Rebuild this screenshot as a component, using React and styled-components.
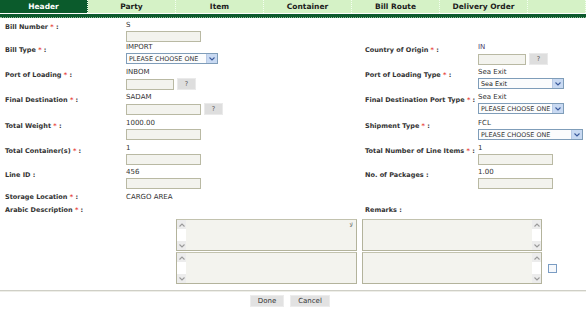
import React from 'react';
import styled, { createGlobalStyle } from 'styled-components';

const Global = createGlobalStyle`
  html, body { margin: 0; padding: 0; background: #fff; }
  body { font-family: "DejaVu Sans", Verdana, sans-serif; font-size: 7px; color: #333; }
`;

const Page = styled.div`
  width: 586px;
  height: 310px;
  overflow: hidden;
  display: flex;
  flex-direction: column;
`;

const TabBar = styled.div`
  display: grid;
  grid-template-columns: repeat(6, 88px) 1fr;
  height: 13px;
  background: #d5f2c6;
`;

const Tab = styled.div`
  display: flex;
  align-items: center;
  justify-content: center;
  font-weight: bold;
  font-size: 7.5px;
  color: ${p => (p.$active ? '#ffffff' : '#1c1c1c')};
  background: ${p => (p.$active ? '#0b5b2c' : '#d5f2c6')};
  border-right: 1px dotted #f4fff0;
`;

const Rule = styled.div`
  margin-top: 1px;
  height: 3px;
  background: #0d5a2d;
  border-bottom: 1px dotted #8fb89a;
`;

const Form = styled.div`
  margin-top: 3px;
  padding-left: 5px;
  display: flex;
  flex-direction: column;
`;

const Row = styled.div`
  display: grid;
  grid-template-columns: 121px 239px 113px 1fr;
  height: ${p => p.$h}px;
`;

const Label = styled.div`
  font-weight: bold;
  font-size: 6.5px;
  color: #333;
  line-height: 8px;
  padding-top: ${p => (p.$pt ?? 3)}px;
  white-space: nowrap;
`;

const Star = styled.span`
  color: #e8473c;
`;

const ValueCell = styled.div`
  display: flex;
  flex-direction: column;
`;

const ValueText = styled.div`
  height: ${p => (p.$h ?? 10)}px;
  line-height: 9px;
  color: ${p => p.$c || '#333'};
  white-space: nowrap;
`;

const FieldLine = styled.div`
  display: flex;
  align-items: center;
  gap: ${p => p.$gap ?? 3}px;
`;

const Input = styled.div`
  box-sizing: border-box;
  width: ${p => p.$w}px;
  height: 11px;
  border: 1px solid #b9b9a3;
  background: #f3f3ee;
`;

const Select = styled.div`
  box-sizing: border-box;
  width: ${p => p.$w}px;
  height: 11px;
  border: 1px solid #7f9db9;
  background: #fbfcfd;
  display: flex;
  align-items: center;
  justify-content: space-between;
  padding-left: 2px;
  font-size: 6.4px;
  color: ${p => (p.$strong ? '#222' : '#333')};
  white-space: nowrap;
  overflow: hidden;
`;

const SelectArrow = styled.span`
  flex: none;
  width: 10px;
  height: 9px;
  background: #c8d9f2;
  border-left: 1px solid #b8c9e4;
  display: flex;
  align-items: center;
  justify-content: center;
`;

const HelpBtn = styled.div`
  box-sizing: border-box;
  width: 19px;
  height: 12px;
  background: #dedede;
  border: 1px solid #eaeaea;
  display: flex;
  align-items: center;
  justify-content: center;
  font-size: 6.5px;
  color: #555;
`;

const AreaGrid = styled.div`
  margin-top: 1px;
  padding-left: 176px;
  display: grid;
  grid-template-columns: 181px 180px 1fr;
  grid-template-rows: 32px 32px;
  column-gap: 5px;
  row-gap: 1px;
`;

const TextBox = styled.div`
  box-sizing: border-box;
  border: 1px solid #b3b39c;
  border-top-color: #c2c2ae;
  background: #f3f3ee;
  display: flex;
  flex-direction: ${p => (p.$rtl ? 'row' : 'row-reverse')};
  position: relative;
`;

const ScrollBar = styled.div`
  width: 9px;
  display: flex;
  flex-direction: column;
  justify-content: space-between;
  background: #ffffff;
`;

const ScrollBtn = styled.div`
  width: 9px;
  height: 9px;
  background: #ececec;
  display: flex;
  align-items: center;
  justify-content: center;
`;

const RtlMark = styled.span`
  position: absolute;
  top: 1px;
  right: 3px;
  font-size: 6px;
  color: #666;
`;

const CheckCell = styled.div`
  padding-left: 1px;
  display: flex;
  align-items: center;
`;

const Check = styled.div`
  box-sizing: border-box;
  width: 9px;
  height: 9px;
  border: 1px solid #7a9cc3;
  background: #f6f8fb;
`;

const Divider = styled.div`
  margin-top: 6px;
  height: 1px;
  background: #cfcfc6;
  border-bottom: 1px solid #eeeee8;
`;

const Actions = styled.div`
  margin-top: 3px;
  display: flex;
  justify-content: center;
  gap: 6px;
  padding-right: 6px;
`;

const Button = styled.div`
  box-sizing: border-box;
  width: ${p => p.$w}px;
  height: 12px;
  background: #e2e2e2;
  border: 1px solid #ececec;
  display: flex;
  align-items: center;
  justify-content: center;
  font-size: 7px;
  color: #333;
`;

const Chevron = ({ up, color = '#3a5a9c' }) => (
  <svg width="6" height="4" viewBox="0 0 6 4">
    <path d={up ? 'M0.5 3.5 L3 1 L5.5 3.5' : 'M0.5 0.5 L3 3 L5.5 0.5'} fill="none" stroke={color} strokeWidth="1.1" />
  </svg>
);

const SelectBox = ({ w, text, strong }) => (
  <Select $w={w} $strong={strong}>
    <span>{text}</span>
    <SelectArrow><Chevron /></SelectArrow>
  </Select>
);

const Req = ({ children }) => (
  <>
    {children} <Star>*</Star> :
  </>
);

const Area = ({ rtl, mark }) => (
  <TextBox $rtl={rtl}>
    <ScrollBar>
      <ScrollBtn><Chevron up color="#9a9a9a" /></ScrollBtn>
      <ScrollBtn><Chevron color="#9a9a9a" /></ScrollBtn>
    </ScrollBar>
    {mark && <RtlMark>ﻻ</RtlMark>}
  </TextBox>
);

const tabs = ['Header', 'Party', 'Item', 'Container', 'Bill Route', 'Delivery Order'];

export default function App() {
  return (
    <Page>
      <Global />
      <TabBar>
        {tabs.map((t, i) => (
          <Tab key={t} $active={i === 0}>{t}</Tab>
        ))}
        <Tab />
      </TabBar>
      <Rule />
      <Form>
        <Row $h={22}>
          <Label $pt={2}><Req>Bill Number</Req></Label>
          <ValueCell>
            <ValueText>S</ValueText>
            <Input $w={75} />
          </ValueCell>
        </Row>
        <Row $h={25}>
          <Label><Req>Bill Type</Req></Label>
          <ValueCell>
            <ValueText>IMPORT</ValueText>
            <SelectBox w={92} text="PLEASE CHOOSE ONE" />
          </ValueCell>
          <Label><Req>Country of Origin</Req></Label>
          <ValueCell>
            <ValueText $c="#4a3a6a">IN</ValueText>
            <FieldLine>
              <Input $w={48} />
              <HelpBtn>?</HelpBtn>
            </FieldLine>
          </ValueCell>
        </Row>
        <Row $h={25}>
          <Label><Req>Port of Loading</Req></Label>
          <ValueCell>
            <ValueText>INBOM</ValueText>
            <FieldLine>
              <Input $w={48} />
              <HelpBtn>?</HelpBtn>
            </FieldLine>
          </ValueCell>
          <Label><Req>Port of Loading Type</Req></Label>
          <ValueCell>
            <ValueText>Sea Exit</ValueText>
            <SelectBox w={86} text="Sea Exit" strong />
          </ValueCell>
        </Row>
        <Row $h={26}>
          <Label><Req>Final Destination</Req></Label>
          <ValueCell>
            <ValueText>SADAM</ValueText>
            <FieldLine>
              <Input $w={75} />
              <HelpBtn>?</HelpBtn>
            </FieldLine>
          </ValueCell>
          <Label><Req>Final Destination Port Type</Req></Label>
          <ValueCell>
            <ValueText>Sea Exit</ValueText>
            <SelectBox w={86} text="PLEASE CHOOSE ONE" />
          </ValueCell>
        </Row>
        <Row $h={25}>
          <Label><Req>Total Weight</Req></Label>
          <ValueCell>
            <ValueText>1000.00</ValueText>
            <Input $w={75} />
          </ValueCell>
          <Label><Req>Shipment Type</Req></Label>
          <ValueCell>
            <ValueText>FCL</ValueText>
            <SelectBox w={105} text="PLEASE CHOOSE ONE" />
          </ValueCell>
        </Row>
        <Row $h={24}>
          <Label><Req>Total Container(s)</Req></Label>
          <ValueCell>
            <ValueText>1</ValueText>
            <Input $w={75} />
          </ValueCell>
          <Label><Req>Total Number of Line Items</Req></Label>
          <ValueCell>
            <ValueText>1</ValueText>
            <Input $w={75} />
          </ValueCell>
        </Row>
        <Row $h={25}>
          <Label>Line ID :</Label>
          <ValueCell>
            <ValueText>456</ValueText>
            <Input $w={75} />
          </ValueCell>
          <Label>No. of Packages :</Label>
          <ValueCell>
            <ValueText>1.00</ValueText>
            <Input $w={75} />
          </ValueCell>
        </Row>
        <Row $h={13}>
          <Label $pt={0}><Req>Storage Location</Req></Label>
          <ValueCell>
            <ValueText $h={9}>CARGO AREA</ValueText>
          </ValueCell>
        </Row>
        <Row $h={12}>
          <Label $pt={0}><Req>Arabic Description</Req></Label>
          <div />
          <Label $pt={0}>Remarks :</Label>
        </Row>
      </Form>
      <AreaGrid>
        <Area rtl mark />
        <Area />
        <div />
        <Area rtl />
        <Area />
        <CheckCell><Check /></CheckCell>
      </AreaGrid>
      <Divider />
      <Actions>
        <Button $w={34}>Done</Button>
        <Button $w={40}>Cancel</Button>
      </Actions>
    </Page>
  );
}
